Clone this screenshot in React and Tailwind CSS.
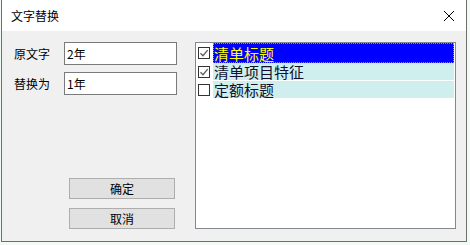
import React from "react";

const font = { fontFamily: '"Noto Sans CJK SC", "Noto Sans", sans-serif' };

function Check({ checked }) {
  return (
    <div className="w-[12px] h-[12px] border border-[#333333] bg-white flex items-center justify-center shrink-0">
      {checked && (
        <svg width="10" height="10" viewBox="0 0 10 10">
          <path d="M1.5 5.2 L4 7.7 L8.7 2.2" fill="none" stroke="#5a5a5a" strokeWidth="1.3" />
        </svg>
      )}
    </div>
  );
}

export default function App() {
  return (
    <div className="w-[470px] h-[245px] bg-[#f2faf6] overflow-hidden" style={font}>
      <div className="ml-[1px] w-[466px] h-[242px] border-x border-b border-[#6e6e6e] flex flex-col bg-[#f0f0f0]">
        {/* title bar */}
        <div className="h-[31px] bg-white flex items-center justify-between pl-[9px] pr-[8px] shrink-0">
          <span className="text-[12px] text-black leading-none">文字替换</span>
          <svg width="12" height="12" viewBox="0 0 12 12" className="mr-[3px]">
            <path d="M1 1 L11 11 M11 1 L1 11" stroke="#000" strokeWidth="1" />
          </svg>
        </div>
        {/* body */}
        <div className="flex pt-[11px] pl-[12px]">
          <div className="flex flex-col w-[163px]">
            <div className="flex items-center h-[23px]">
              <span className="w-[50px] text-[12px] text-black leading-none">原文字</span>
              <div className="w-[113px] h-[23px] bg-white border border-[#7a7a7a] flex items-center pl-[2px] text-[12px] leading-none">2年</div>
            </div>
            <div className="flex items-center h-[23px] mt-[7px]">
              <span className="w-[50px] text-[12px] text-black leading-none">替换为</span>
              <div className="w-[113px] h-[23px] bg-white border border-[#7a7a7a] flex items-center pl-[2px] text-[12px] leading-none">1年</div>
            </div>
            <div className="flex flex-col ml-[55px] mt-[83px] gap-[9px]">
              <div className="w-[106px] h-[21px] bg-[#e1e1e1] border border-[#adadad] flex items-center justify-center text-[12px] leading-none">确定</div>
              <div className="w-[106px] h-[21px] bg-[#e1e1e1] border border-[#adadad] flex items-center justify-center text-[12px] leading-none">取消</div>
            </div>
          </div>
          <div className="ml-[18px] w-[261px] h-[187px] bg-white border border-[#828790] flex flex-col pr-[1px]">
            <div className="flex items-center h-[20px]">
              <div className="ml-[2px] mr-[3px]"><Check checked /></div>
              <div className="flex-1 h-[20px] bg-[#0000ff] border border-dotted border-[#9a7cff] flex items-center text-[15px] text-[#ffff00] leading-none">清单标题</div>
            </div>
            <div className="flex h-[18px]">
              <div className="h-[17px] flex items-center">
                <div className="ml-[2px] mr-[3px]"><Check checked /></div>
              </div>
              <div className="flex-1 h-[17px] bg-[#cfefee] flex items-center pl-[1px] text-[15px] text-[#101030] leading-none">清单项目特征</div>
            </div>
            <div className="flex h-[18px]">
              <div className="h-[17px] flex items-center">
                <div className="ml-[2px] mr-[3px]"><Check /></div>
              </div>
              <div className="flex-1 h-[17px] bg-[#cfefee] flex items-center pl-[1px] text-[15px] text-[#101030] leading-none">定额标题</div>
            </div>
          </div>
        </div>
      </div>
    </div>
  );
}
